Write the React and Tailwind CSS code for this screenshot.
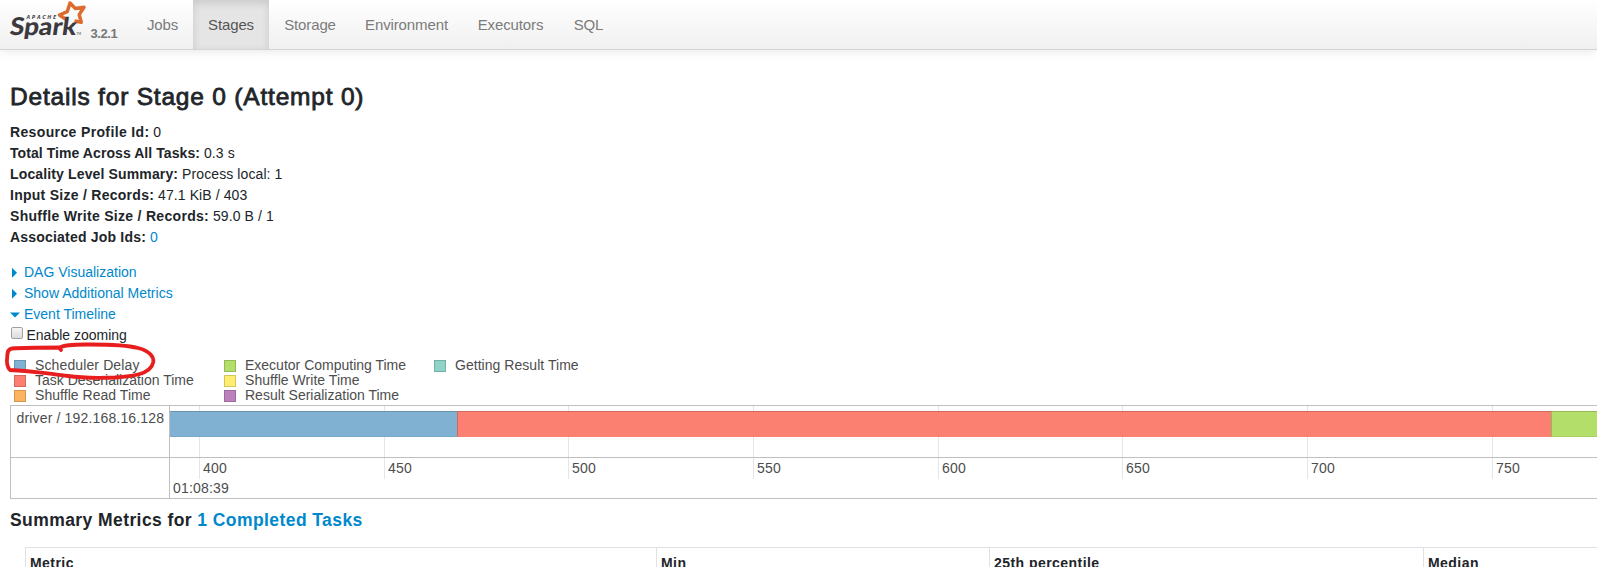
const tabs = [
  { label: 'Jobs', cls: 'w-[61px]' },
  { label: 'Stages', cls: 'w-[76px]', active: true },
  { label: 'Storage', cls: 'w-[82px]' },
  { label: 'Environment', cls: 'w-[111px]' },
  { label: 'Executors', cls: 'w-[97px]' },
  { label: 'SQL', cls: 'w-[59px]' },
];

const details = [
  { name: 'Resource Profile Id:', value: '0', cls: 'tracking-[0.36px]' },
  { name: 'Total Time Across All Tasks:', value: '0.3 s', cls: 'tracking-[0.07px]' },
  { name: 'Locality Level Summary:', value: 'Process local: 1', cls: 'tracking-[0.14px]' },
  { name: 'Input Size / Records:', value: '47.1 KiB / 403', cls: 'tracking-[0.27px]' },
  { name: 'Shuffle Write Size / Records:', value: '59.0 B / 1', cls: 'tracking-[0.3px]' },
  { name: 'Associated Job Ids:', value: '0', cls: 'tracking-[0.2px]', link: true },
];

const legend = [
  [
    { label: 'Scheduler Delay', cls: 'bg-[#80b1d3] border-[#6b94b0]', text: 'tracking-[0.12px]' },
    { label: 'Task Deserialization Time', cls: 'bg-[#fb8072] border-[#d26b5f]', text: '' },
    { label: 'Shuffle Read Time', cls: 'bg-[#fdb462] border-[#d39651]', text: 'tracking-[0.04px]' },
  ],
  [
    { label: 'Executor Computing Time', cls: 'bg-[#b3de69] border-[#95b957]', text: '' },
    { label: 'Shuffle Write Time', cls: 'bg-[#ffed6f] border-[#d5c65c]', text: 'tracking-[0.04px]' },
    { label: 'Result Serialization Time', cls: 'bg-[#bc80bd] border-[#9d6b9e]', text: '' },
  ],
  [{ label: 'Getting Result Time', cls: 'bg-[#8dd3c7] border-[#75b0a6]', text: 'tracking-[0.04px]' }],
];

const ticks = [
  { label: '400', cls: 'w-[185px]' },
  { label: '450', cls: 'w-[184px]' },
  { label: '500', cls: 'w-[185px]' },
  { label: '550', cls: 'w-[185px]' },
  { label: '600', cls: 'w-[184px]' },
  { label: '650', cls: 'w-[185px]' },
  { label: '700', cls: 'w-[185px]' },
  { label: '750', cls: 'w-[185px]' },
];

function Logo() {
  return (
    <svg width="88" height="44" viewBox="0 0 88 44" className="block shrink-0" aria-label="Apache Spark">
      <path
        d="M67 20 L59.4 15 L67.3 11.6 L70 3 L75.2 8.4 L84 7.3 L79.2 14.6 L81.3 22.3 L74.5 21"
        fill="none"
        stroke="#dd6a2e"
        strokeWidth="3.5"
        strokeLinejoin="round"
      />
      <g transform="skewX(-8)">
        <text x="14" y="35.2" fontFamily="Lato" fontWeight="900" fontSize="24.5" textLength="66.5" lengthAdjust="spacingAndGlyphs" fill="#3c3a3e">Spark</text>
      </g>
      <text x="26.5" y="18.8" fontFamily="Open Sans" fontStyle="italic" fontWeight="700" fontSize="5.6" textLength="29.5" fill="#3c3a3e">APACHE</text>
      <text x="76.5" y="35" fontFamily="Lato" fontSize="3" fill="#3c3a3e">TM</text>
    </svg>
  );
}

function Navbar() {
  return (
    <nav className="flex h-[50px] items-stretch border-b border-[#d4d4d4] bg-linear-to-b from-white to-[#f0f0f0] shadow-[0_1px_10px_rgba(0,0,0,0.1)]">
      <Logo />
      <span className="w-[44px] pt-[26px] pl-[2.5px] text-[13px] leading-[15px] font-bold tracking-[-0.4px] text-[#777]">3.2.1</span>
      {tabs.map((t) => (
        <a
          key={t.label}
          className={`${t.cls} pt-[15px] text-center text-[15px] leading-5 tracking-[-0.12px] ${
            t.active ? 'bg-[#e5e5e5] text-[#555] shadow-[inset_0_3px_8px_rgba(0,0,0,0.125)]' : 'text-[#7b7b7b]'
          }`}
        >
          {t.label}
        </a>
      ))}
    </nav>
  );
}

function Toggle({ open, children }) {
  return (
    <div className="flex h-[21px] items-center text-[#0088cc]">
      <svg width="14" height="12" viewBox="0 0 14 12" className="shrink-0" fill="#0088cc">
        {open ? <path d="M0 3.5 H10 L5 8.5 Z" /> : <path d="M2 0.7 L7 5.7 L2 10.7 Z" />}
      </svg>
      <span className="leading-[21px]">{children}</span>
    </div>
  );
}

function Legend() {
  return (
    <div className="mt-[13px] flex h-[47px] pl-1 text-[#4d4d4d]">
      {legend.map((col) => (
        <div key={col[0].label} className="w-[210px]">
          {col.map((item) => (
            <div key={item.label} className="flex h-[15px] items-center">
              <span className={`mr-[9px] size-[12px] shrink-0 border ${item.cls}`} />
              <span className={`leading-[15px] whitespace-nowrap ${item.text}`}>{item.label}</span>
            </div>
          ))}
        </div>
      ))}
    </div>
  );
}

function Timeline() {
  return (
    <div className="flex h-[94px] border border-r-0 border-[#bfbfbf] text-[#4d4d4d]">
      <div className="w-[159px] shrink-0 border-r border-[#bfbfbf]">
        <div className="h-[52px] border-b border-[#bfbfbf] pt-1 pl-[5.5px] leading-[17px] tracking-[0.16px] whitespace-nowrap">
          driver / 192.168.16.128
        </div>
      </div>
      <div className="relative min-w-0 flex-1 overflow-hidden">
        <div className="flex h-[73px] pl-[29px]">
          {ticks.map((t) => (
            <div key={t.label} className={`${t.cls} shrink-0 border-l border-[#e5e5e5] pt-[54px] pl-[3px] leading-[17px] tracking-[0.2px]`}>
              {t.label}
            </div>
          ))}
        </div>
        <div className="pt-px pl-[3px] leading-[17px] tracking-[0.18px]">01:08:39</div>
        <div className="absolute inset-x-0 top-[51px] h-px bg-[#bfbfbf]" />
        <div className="absolute inset-x-0 top-[5px] flex h-[26px]">
          <div className="w-[287px] shrink-0 border-y border-[#6b94b0] border-b-[#79a8c8] bg-[#80b1d3]" />
          <div className="w-[1094px] shrink-0 border-t border-l border-[#d26b5f] bg-[#fb8072]" />
          <div className="flex-1 border-y border-l border-[#95b957] border-b-[#aad364] bg-[#b3de69]" />
        </div>
      </div>
    </div>
  );
}

function MetricsTable() {
  return (
    <div className="mt-[19px] ml-[15px] flex h-[36px] border-t border-l border-[#dee2e6] leading-[21px] font-bold tracking-[0.45px]">
      <div className="w-[631px] shrink-0 border-r border-[#dee2e6] pt-[5px] pl-1">Metric</div>
      <div className="w-[333px] shrink-0 border-r border-[#dee2e6] pt-[5px] pl-1">Min</div>
      <div className="w-[434px] shrink-0 border-r border-[#dee2e6] pt-[5px] pl-1">25th percentile</div>
      <div className="flex-1 pt-[5px] pl-1">Median</div>
    </div>
  );
}

export default function App() {
  return (
    <div className="relative h-[567px] overflow-hidden bg-white font-['Liberation_Sans',Arial,sans-serif] text-[14px] text-[#212529]">
      <Navbar />
      <main className="pt-[32px] pl-[10px]">
        <h3 className="h-[40px] text-[24.5px] leading-[29px] tracking-[0.8px] whitespace-nowrap [-webkit-text-stroke:0.8px_#212529]">
          Details for Stage 0 (Attempt 0)
        </h3>
        <ul>
          {details.map((d) => (
            <li key={d.name} className="h-[21px] leading-[21px] whitespace-nowrap">
              <strong className={d.cls}>{d.name}</strong>{' '}
              <span className={d.link ? 'text-[#0088cc]' : 'tracking-[0.1px]'}>{d.value}</span>
            </li>
          ))}
        </ul>
        <div className="pt-[14px]">
          <Toggle>DAG Visualization</Toggle>
          <Toggle>Show Additional Metrics</Toggle>
          <Toggle open>Event Timeline</Toggle>
          <div className="flex h-[20px] items-start">
            <span className="mt-[2px] ml-px size-[12px] rounded-[2px] border border-[#a0a0a0] bg-linear-to-b from-[#f6f6f6] to-[#dcdcdc]" />
            <span className="ml-[3.5px] leading-[21px]">Enable zooming</span>
          </div>
        </div>
        <Legend />
        <Timeline />
        <h4 className="mt-[11px] h-[18px] text-[17.5px] leading-[21px] font-bold tracking-[0.42px] whitespace-nowrap">
          Summary Metrics for <a className="text-[#0088cc]">1 Completed Tasks</a>
        </h4>
        <MetricsTable />
      </main>
      <svg className="absolute top-[335px] left-0" width="165" height="50" viewBox="0 335 165 50" fill="none" stroke="#e71d1e" strokeWidth="3.8" strokeLinecap="round" strokeLinejoin="round">
        <path d="M61 350 L59 347.5 C45 347.5 25 347.5 12 348.5 C8 349 7.2 352 7.2 357 C6.5 362 7 367 10 370 C30 370.5 50 374 68 376 C85 378.5 100 378 115 377.5 C130 376.5 151 375 153.3 362 C154 357 150 351 138 348 C125 344.5 105 344.5 90 344.5 C80 344.5 66 344 60 347.5" />
      </svg>
    </div>
  );
}
